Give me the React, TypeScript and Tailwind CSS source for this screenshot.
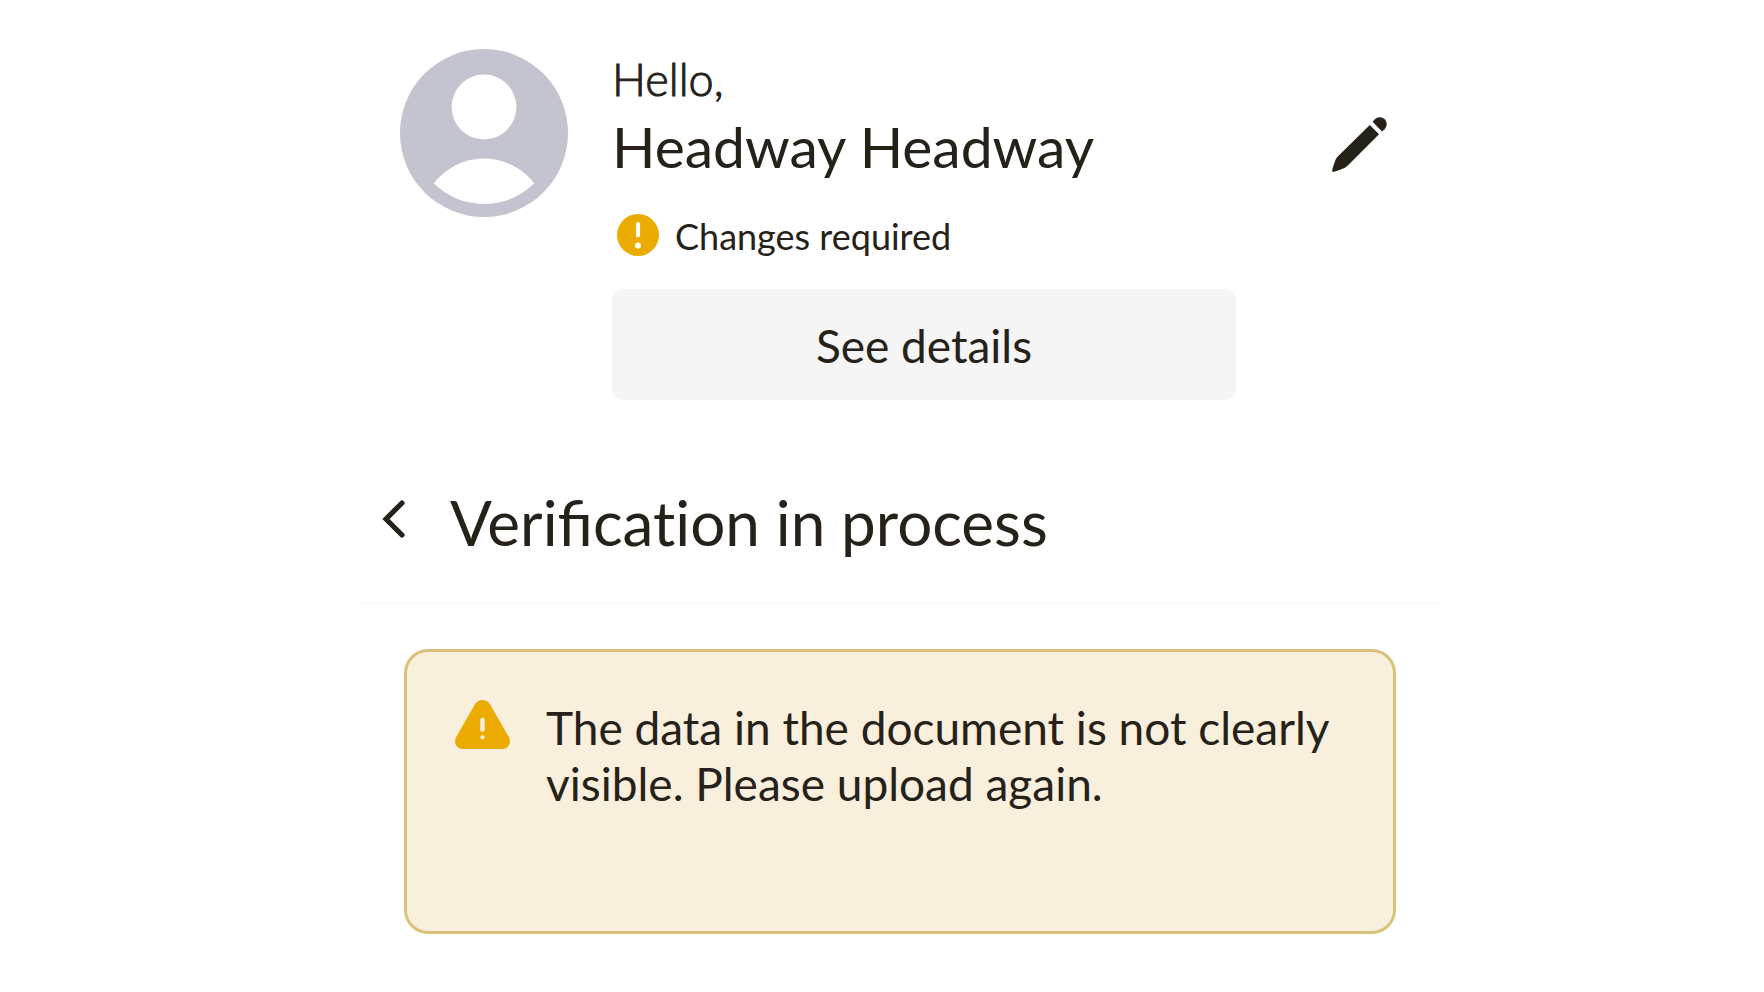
function AvatarIcon() {
  return (
    <svg viewBox="0 0 168 168" className="size-[168px] shrink-0" aria-hidden="true">
      <circle cx="84" cy="84" r="84" fill="#c4c3d0" />
      <circle cx="84" cy="58" r="32.4" fill="#fff" />
      <path d="M33.8 134.3C46 119 64 109.6 84 109.6S122 119 134.2 134.3C121 147.500 103.500 155 84 155S47 147.500 33.800 134.300Z" fill="#fff" />
    </svg>
  );
}

function PencilIcon() {
  return (
    <svg viewBox="0 0 55 55" className="size-[55px] overflow-visible" aria-hidden="true">
      <path
        d="M37.800 8L47 17.200L15.800 48.400C14.200 50 12.500 51 10.500 51.800C7 53.200 4.500 54 1.800 54.800C.6 55.100 0 54.500 .2 53.300C.8 50.500 1.700 47.800 3 44.200C3.700 42.200 4.400 40.900 6 39.300Z"
        fill="#262119"
      />
      <path d="M40.600 4.800L42.600 2.600A7.300 7.300 0 0 1 53 2.500A7.300 7.300 0 0 1 52.600 12.200L50 14.400Z" fill="#262119" />
    </svg>
  );
}

function AlertCircle() {
  return (
    <svg viewBox="0 0 42 42" className="size-[42px] shrink-0" aria-hidden="true">
      <circle cx="21" cy="21" r="21" fill="#ebab00" />
      <path d="M21 10.200V21.500" stroke="#fff" strokeWidth="4.200" strokeLinecap="round" />
      <circle cx="21" cy="31.500" r="3" fill="#fff" />
    </svg>
  );
}

function AlertTriangle() {
  return (
    <svg viewBox="0 0 55 49" className="h-[49px] w-[55px] shrink-0" aria-hidden="true">
      <path
        d="M20 4.300C23.300 -1.400 31.700 -1.400 35 4.300L53.800 37C56.800 42.400 53.500 49 47 49H8C1.500 49 -1.800 42.400 1.200 37Z"
        fill="#ebab00"
      />
      <path d="M27.500 20V29.500" stroke="#f8efdd" strokeWidth="4.400" strokeLinecap="round" />
      <circle cx="27.500" cy="37.300" r="2.100" fill="#f8efdd" />
    </svg>
  );
}

export default function App() {
  return (
    <div className="min-h-screen bg-white pl-9 font-['Lato',sans-serif] text-[#262119]">
      <main className="mx-auto max-w-[1080px] pt-[49px]">
        {/* Profile */}
        <section className="flex items-start px-10">
          <AvatarIcon />
          <div className="ml-11 w-full max-w-[624px] pt-1.5">
            <p className="text-[45px] leading-[48px] font-light [-webkit-text-stroke:1px]">Hello,</p>
            <h1 className="mt-2 text-[57px] leading-[70px]">Headway Headway</h1>
            <div className="mt-[30px] flex h-12 items-center gap-4 pl-[5px]">
              <AlertCircle />
              <span className="pt-0.5 text-[36px] leading-[48px]">Changes required</span>
            </div>
            <button
              type="button"
              className="mt-[30px] h-[111px] w-full rounded-xl bg-[#f5f5f5] pt-0.5 text-[46px] leading-[56px]"
            >
              See details
            </button>
          </div>
          <button type="button" aria-label="Edit profile" className="mt-[68px] mr-[13px] ml-auto">
            <PencilIcon />
          </button>
        </section>

        {/* Title bar */}
        <header className="mt-[82px] flex items-center gap-11 border-b-[3px] border-[#fafafa] pb-10 pl-[22px]">
          <button type="button" aria-label="Back" className="pb-1.5">
            <svg viewBox="0 0 24 38" className="h-[38px] w-6" fill="none" aria-hidden="true">
              <path d="M20 3L4 19L20 35" stroke="#262119" strokeWidth="5.200" strokeLinecap="round" strokeLinejoin="miter" />
            </svg>
          </button>
          <h2 className="text-[62px] leading-[80px]">
            Verifi<span className="[font-variant-ligatures:none]">cation</span> in process
          </h2>
        </header>

        {/* Warning */}
        <div className="mx-11 mt-11 flex min-h-[285px] items-start gap-9 rounded-3xl border-[3px] border-[#dbc27c] bg-[#f8efdd] px-12 py-12">
          <AlertTriangle />
          <p className="text-[46px] leading-[56px]">
            The data in the document is not clearly visible. Please upload again.
          </p>
        </div>
      </main>
    </div>
  );
}
